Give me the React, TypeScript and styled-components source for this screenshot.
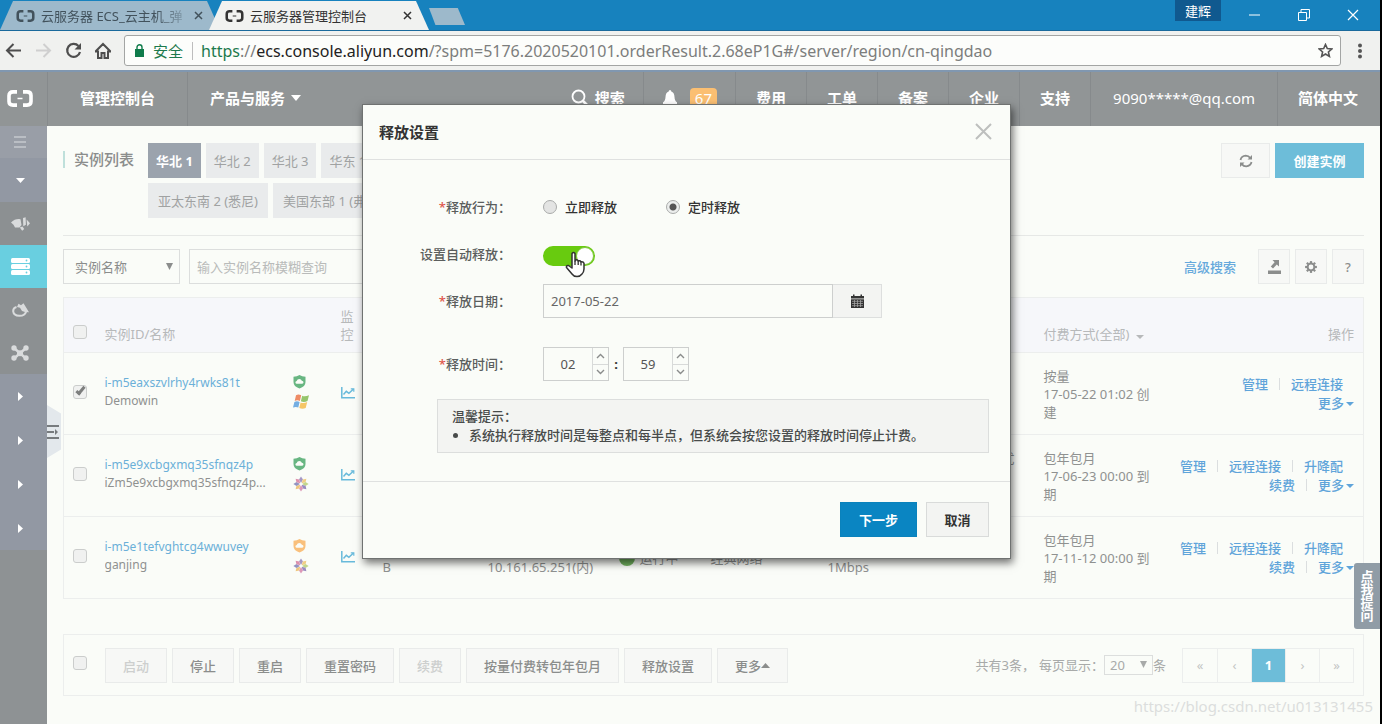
import React from 'react';
import styled, { createGlobalStyle, css } from 'styled-components';

const GlobalStyle = createGlobalStyle`
  *, *::before, *::after { box-sizing: border-box; }
  body {
    margin: 0;
    background: #000;
    font-family: "Noto Sans", "Noto Sans CJK SC", sans-serif;
    font-size: 13px;
    line-height: 18px;
    color: #8b8d8c;
  }
  button, input, select {
    font-family: inherit;
    font-size: inherit;
    color: inherit;
    margin: 0;
  }
  button { cursor: pointer; }
  a { text-decoration: none; color: inherit; }
`;

const Page = styled.div`
  position: relative;
  display: flex;
  flex-direction: column;
  min-height: 100vh;
  margin-right: 2px;
  background: #fafcf8;
  overflow: hidden;
`;

/* ---------- browser window ---------- */

const TabStrip = styled.div`
  display: flex;
  align-items: flex-end;
  height: 31px;
  background: #1782be;
  border-bottom: 1px solid #1a6a9c;
`;

const Tab = styled.div<{ $active?: boolean }>`
  display: flex;
  align-items: center;
  gap: 6px;
  width: 220px;
  height: 29px;
  padding: 0 13px 0 16px;
  color: ${p => (p.$active ? '#333' : '#42525c')};
  background: ${p => (p.$active ? '#f1f2f0' : '#9db9cb')};
  clip-path: polygon(13px 0, calc(100% - 13px) 0, 100% 100%, 0 100%);
  margin-left: ${p => (p.$active ? '-11px' : '0')};
`;

const TabTitle = styled.span<{ $fade?: boolean }>`
  flex: 1;
  overflow: hidden;
  white-space: nowrap;
  ${p => p.$fade && css`mask-image: linear-gradient(90deg, #000 80%, rgba(0, 0, 0, 0.3));`}
`;

const TabClose = styled.button`
  display: flex;
  align-items: center;
  justify-content: center;
  width: 18px;
  height: 18px;
  padding: 0;
  border: 0;
  background: none;
`;

const NewTab = styled.button`
  width: 36px;
  height: 17px;
  margin: 0 0 5px 0;
  padding: 0;
  border: 0;
  background: #9db9cb;
  clip-path: polygon(0 0, 80% 0, 100% 100%, 18% 100%);
`;

const WindowControls = styled.div`
  display: flex;
  align-items: flex-start;
  margin-left: auto;
  align-self: flex-start;
`;

const UserBadge = styled.button`
  width: 46px;
  height: 21px;
  margin-right: 9px;
  padding: 0;
  border: 0;
  background: #10598f;
  color: #fff;
  line-height: 20px;
`;

const WindowButton = styled.button`
  display: flex;
  align-items: center;
  justify-content: center;
  width: 49px;
  height: 29px;
  padding: 0;
  border: 0;
  background: none;
  color: #fff;
  &:last-child { margin-right: 3px; }
`;

const Toolbar = styled.div`
  display: flex;
  align-items: center;
  height: 41px;
  padding: 0 10px 0 4px;
  background: #f0f1ef;
  border-bottom: 2px solid #8097b0;
`;

const ToolButton = styled.button<{ $dim?: boolean }>`
  display: flex;
  align-items: center;
  justify-content: center;
  width: 18px;
  height: 30px;
  margin-right: 12px;
  padding: 0;
  border: 0;
  background: none;
  color: ${p => (p.$dim ? '#cfcfcf' : '#4e4e4e')};
`;

const Address = styled.div`
  display: flex;
  align-items: center;
  flex: 1;
  height: 31px;
  padding: 0 7px 0 10px;
  border: 1px solid #a3a5a4;
  border-radius: 3px;
  background: #fcfdfb;
  font-size: 16px;
  line-height: 22px;
  color: #7c7e7d;
`;

const Secure = styled.span`
  margin-left: 9px;
  padding-right: 9px;
  font-size: 15px;
  line-height: 18px;
  color: #1c7a4d;
  border-right: 1px solid #bdbdbd;
`;

const Url = styled.span`
  flex: 1;
  margin-left: 8px;
  white-space: nowrap;
  overflow: hidden;
  i { font-style: normal; color: #1c7a4d; }
  b { font-weight: 400; color: #222; }
`;

const MenuDots = styled.button`
  display: flex;
  justify-content: center;
  width: 20px;
  margin-left: 9px;
  padding: 0;
  border: 0;
  background: none;
  color: #555;
`;

/* ---------- console header ---------- */

const TopBar = styled.header`
  display: flex;
  height: 54px;
  padding: 0 2px 0 0;
  background: #919596;
  color: #fff;
  font-size: 15px;
  font-weight: 700;
`;

const TopItem = styled.a<{ $pad?: number; $light?: boolean; $plain?: boolean }>`
  display: flex;
  align-items: center;
  gap: 6px;
  padding: 0 ${p => p.$pad ?? 20}px 2px;
  white-space: nowrap;
  font-weight: ${p => (p.$light ? 400 : 700)};
  border-left: 1px solid ${p => (p.$plain ? 'transparent' : '#868a8c')};
`;

const Brand = styled.a`
  display: flex;
  align-items: center;
  width: 47px;
  padding: 0 0 2px 7px;
`;

const Spacer = styled.div`
  flex: 1;
`;

const Count = styled.span`
  margin-left: 6px;
  padding: 0 5px;
  border-radius: 4px;
  background: #fbbf72;
  font-weight: 400;
  line-height: 20px;
`;

/* ---------- layout ---------- */

const Columns = styled.div`
  display: flex;
  flex: 1;
`;

const Sidebar = styled.nav`
  display: flex;
  flex-direction: column;
  flex: none;
  width: 47px;
  background: #8e9294;
`;

const sideTones = {
  top: { height: 32, background: '#999ea7' },
  group: { height: 44, background: '#9298a3' },
  plain: { height: 43, background: '#8c9092' },
  active: { height: 43, background: '#69cfe0' },
};

const SideItem = styled.a<{ $tone: keyof typeof sideTones }>`
  display: flex;
  align-items: center;
  justify-content: center;
  height: ${p => sideTones[p.$tone].height}px;
  padding-right: 7px;
  color: ${p => (p.$tone === 'plain' ? '#d9dbdc' : '#fff')};
  background: ${p => sideTones[p.$tone].background};
`;

const Handle = styled.button`
  position: absolute;
  left: 47px;
  top: 405px;
  display: flex;
  align-items: center;
  width: 14px;
  height: 53px;
  padding: 0;
  border: 0;
  background: #e3e8ec;
  color: #777b7e;
  clip-path: polygon(0 0, 100% 16%, 100% 84%, 0 100%);
`;

const Main = styled.main`
  flex: 1;
  min-width: 0;
  padding: 17px 16px 28px;
`;

const TitleRow = styled.div`
  display: flex;
  align-items: flex-start;
  gap: 5px;
  padding-bottom: 17px;
  border-bottom: 1px solid #e6e8e6;
`;

const Title = styled.h1`
  width: 80px;
  margin: 8px 0 0;
  padding-left: 9px;
  border-left: 2px solid #bfe0db;
  font-size: 15px;
  font-weight: 500;
  line-height: 17px;
  white-space: nowrap;
`;

const Regions = styled.div`
  display: flex;
  flex-direction: column;
  gap: 5px;
  flex: 1;
  min-width: 0;
`;

const RegionLine = styled.div<{ $roomy?: boolean }>`
  display: flex;
  gap: 5px;
  button { padding: 0 ${p => (p.$roomy ? 10 : 8)}px; }
`;

const Region = styled.button<{ $on?: boolean }>`
  height: 35px;
  border: 0;
  white-space: nowrap;
  color: ${p => (p.$on ? '#fff' : '#a0a2a2')};
  font-weight: ${p => (p.$on ? 700 : 400)};
  background: ${p => (p.$on ? '#9ba3ad' : '#e9ebec')};
`;

const PlainButton = styled.button<{ $width?: number; $off?: boolean }>`
  display: flex;
  align-items: center;
  justify-content: center;
  height: 35px;
  padding: 0 17px;
  ${p => p.$width && css`width: ${p.$width}px; padding: 0;`}
  border: 1px solid #e9ebea;
  background: #f7f8f6;
  white-space: nowrap;
  font-weight: 500;
  color: ${p => (p.$off ? '#cdcfce' : '#8b8d8c')};
`;

const CreateButton = styled.button`
  height: 35px;
  width: 89px;
  padding: 0;
  border: 0;
  background: #6dbdd9;
  color: #fff;
  font-weight: 700;
`;

const SearchRow = styled.div`
  display: flex;
  align-items: center;
  gap: 5px;
  padding: 13px 0;
`;

const SelectBox = styled.label<{ $small?: boolean }>`
  position: relative;
  display: inline-flex;
  width: ${p => (p.$small ? 49 : 117)}px;
  height: ${p => (p.$small ? 20 : 35)}px;
  margin-right: ${p => (p.$small ? 0 : 4)}px;
  select {
    appearance: none;
    width: 100%;
    padding: 0 0 0 ${p => (p.$small ? 5 : 11)}px;
    border: 1px solid #dcdedd;
    border-radius: 0;
    background: #fafcf8;
  }
  svg {
    position: absolute;
    right: ${p => (p.$small ? 6 : 7)}px;
    top: calc(50% - 4px);
    pointer-events: none;
  }
`;

const SearchInput = styled.input`
  width: 230px;
  height: 35px;
  padding: 0 7px;
  border: 1px solid #dcdedd;
  background: #fafcf8;
  &::placeholder { color: #b9bbba; opacity: 1; }
`;

const Advanced = styled.a`
  margin: 0 17px 0 auto;
  color: #66a9dc;
  font-weight: 500;
`;

/* ---------- table ---------- */

const Table = styled.table`
  width: 100%;
  table-layout: fixed;
  border-collapse: collapse;
  border: 1px solid #eceeed;
`;

const HeadCell = styled.th<{ $right?: boolean }>`
  height: 55px;
  padding: 0 ${p => (p.$right ? 9 : 0)}px 9px 0;
  vertical-align: bottom;
  text-align: ${p => (p.$right ? 'right' : 'left')};
  font-weight: 400;
  color: #b7b9ba;
  background: #f6f7fa;
`;

const Row = styled.tr`
  border-top: 1px solid #eceeed;
`;

const Cell = styled.td<{ $end?: boolean; $lift?: boolean }>`
  height: 82px;
  padding: 0 ${p => (p.$end ? 9 : 0)}px ${p => (p.$lift ? 3 : 0)}px 0;
  vertical-align: middle;
  color: #8f9190;
`;

const CheckPad = styled.div<{ $head?: boolean }>`
  display: flex;
  padding: 0 0 ${p => (p.$head ? 4 : 0)}px 9px;
`;

const Check = styled.input`
  appearance: none;
  width: 14px;
  height: 14px;
  border: 1px solid #cbcdcc;
  border-radius: 3px;
  background: #f0f1f0;
  &:checked::before {
    content: "";
    display: block;
    width: 5px;
    height: 10px;
    margin: -1px 0 0 4px;
    border: solid #7d7f7e;
    border-width: 0 3px 3px 0;
    transform: rotate(40deg);
  }
`;

const Ident = styled.a`
  display: block;
  font-size: 12px;
  color: #6bb0d8;
`;

const Name = styled.div`
  width: 172px;
  overflow: hidden;
  font-size: 12px;
  text-overflow: ellipsis;
  white-space: nowrap;
`;

const IconStack = styled.div`
  display: flex;
  flex-direction: column;
  gap: 5px;
`;

const Status = styled.div`
  display: flex;
  align-items: center;
  gap: 5px;
`;

const Dot = styled.span`
  width: 16px;
  height: 16px;
  border-radius: 8px;
  background: #72b35f;
`;

const Tail = styled.div`
  width: 187px;
  text-align: right;
  white-space: nowrap;
`;

const PayText = styled.div`
  width: 118px;
`;

const ActionLine = styled.div<{ $more?: boolean }>`
  display: flex;
  align-items: center;
  justify-content: flex-end;
  padding-right: ${p => (p.$more ? 0 : 11)}px;
  height: 19px;
  color: #5fa4da;
  white-space: nowrap;
  a + a::before {
    content: "";
    display: inline-block;
    width: 1px;
    height: 12px;
    margin: 0 11px;
    vertical-align: -1px;
    background: #dbdedf;
  }
  a { font-weight: 500; }
  svg { margin-left: 2px; vertical-align: 2px; }
`;

/* ---------- bottom bar ---------- */

const ActionBar = styled.div`
  display: flex;
  align-items: center;
  gap: 5px;
  height: 62px;
  margin-top: 35px;
  padding: 0 9px 0 0;
  border: 1px solid #eceeed;
`;

const CheckSlot = styled.div`
  display: flex;
  width: 36px;
  padding: 0 0 4px 9px;
`;

const Paging = styled.div`
  display: flex;
  align-items: center;
  margin-left: auto;
  color: #a8aaa9;
`;

const PageCount = styled.span`
  margin-right: 4px;
`;

const Pager = styled.div`
  display: flex;
  margin-left: 16px;
  border: 1px solid #eceeed;
`;

const PageLink = styled.a<{ $on?: boolean }>`
  width: 34px;
  height: 33px;
  line-height: 33px;
  text-align: center;
  color: ${p => (p.$on ? '#fff' : '#c3c5c4')};
  font-weight: ${p => (p.$on ? 700 : 400)};
  background: ${p => (p.$on ? '#6dbdd9' : 'transparent')};
  & + & { border-left: 1px solid #eceeed; }
`;

const AskTab = styled.button`
  position: absolute;
  right: 0;
  top: 563px;
  width: 26px;
  height: 66px;
  padding: 0 6px;
  border: 0;
  border-radius: 3px 0 0 3px;
  background: #909ca6;
  color: #fff;
  font-weight: 700;
  line-height: 13px;
`;

const Watermark = styled.div`
  position: absolute;
  right: 7px;
  bottom: 8px;
  font-size: 15px;
  line-height: 20px;
  color: #dcdedd;
`;

/* ---------- dialog ---------- */

const DialogLayer = styled.div`
  position: absolute;
  inset: 104px 7px auto 0;
  display: flex;
  justify-content: center;
  pointer-events: none;
`;

const Dialog = styled.section`
  width: 649px;
  border: 1px solid #6f7271;
  background: #fafcf8;
  box-shadow: 2px 4px 8px rgba(0, 0, 0, 0.55);
  color: #555857;
  font-weight: 500;
  pointer-events: auto;
`;

const DialogHead = styled.div`
  display: flex;
  align-items: center;
  justify-content: space-between;
  height: 55px;
  padding: 0 18px 0 16px;
  border-bottom: 1px solid #dfe1e0;
`;

const DialogTitle = styled.h2`
  margin: 0;
  font-size: 15px;
  line-height: 20px;
  font-weight: 700;
  color: #333;
`;

const CloseButton = styled.button`
  display: flex;
  padding: 0 0 2px;
  border: 0;
  background: none;
  color: #bdbfbe;
`;

const DialogBody = styled.form`
  padding: 30px 21px 28px 0;
  border-bottom: 1px solid #dfe1e0;
`;

const Field = styled.div<{ $wide?: boolean }>`
  display: flex;
  align-items: center;
  height: 34px;
  margin-bottom: ${p => (p.$wide ? 29 : 13)}px;
`;

const Label = styled.label`
  width: 148px;
  margin-right: 32px;
  text-align: right;
  color: #5b5e5d;
  em { font-style: normal; color: #e0554a; }
`;

const RadioLabel = styled.label`
  display: flex;
  align-items: center;
  gap: 8px;
  margin-right: 49px;
  color: #333;
`;

const Radio = styled.input`
  appearance: none;
  width: 14px;
  height: 14px;
  border: 1px solid #a9abaa;
  border-radius: 7px;
  background: #e3e4e3;
  &:checked { background: radial-gradient(circle, #555 0 3px, #eceeed 4px); }
`;

const Toggle = styled.input`
  appearance: none;
  width: 52px;
  height: 20px;
  margin-top: 4px;
  padding: 1px;
  border-radius: 10px;
  background: #68cb0f;
  &::before {
    content: "";
    display: block;
    width: 18px;
    height: 18px;
    margin-left: 32px;
    border-radius: 9px;
    border: 1px solid #7fc63f;
    background: #fff;
  }
`;

const ToggleWrap = styled.div`
  position: relative;
  display: flex;
`;

const Pointer = styled.svg`
  position: absolute;
  left: 22px;
  top: 9px;
`;

const DateInput = styled.input`
  width: 290px;
  height: 34px;
  padding: 0 7px;
  border: 1px solid #cdcfce;
  background: #fafcf8;
  color: #666;
`;

const DateButton = styled.button`
  display: flex;
  align-items: center;
  justify-content: center;
  width: 49px;
  height: 34px;
  padding: 0;
  border: 1px solid #dddfde;
  border-left: 0;
  background: #f3f4f2;
  color: #333;
`;

const NumberBox = styled.div`
  display: flex;
  width: 66px;
  height: 34px;
  border: 1px solid #cdcfce;
  input {
    width: 48px;
    padding: 0;
    border: 0;
    background: none;
    text-align: center;
    color: #555;
  }
`;

const Steps = styled.div`
  display: flex;
  flex-direction: column;
  flex: 1;
  border-left: 1px solid #d8dad9;
  button {
    display: flex;
    flex: 1;
    align-items: center;
    justify-content: center;
    padding: 0;
    border: 0;
    background: none;
    color: #8a8c8b;
  }
  button + button { border-top: 1px solid #d8dad9; }
`;

const Colon = styled.span`
  width: 14px;
  text-align: center;
  font-weight: 700;
  color: #333;
`;

const Hint = styled.div`
  margin: -11px 0 0 74px;
  padding: 7px 14px;
  border: 1px solid #dcdedd;
  background: #f3f4f2;
  line-height: 19px;
  color: #484b4a;
  p { margin: 0; }
  ul { margin: 0; padding-left: 17px; }
`;

const DialogFoot = styled.div`
  display: flex;
  justify-content: flex-end;
  gap: 9px;
  padding: 20px 21px 21px;
`;

const FootButton = styled.button<{ $primary?: boolean }>`
  width: ${p => (p.$primary ? 77 : 63)}px;
  height: 35px;
  padding: 0;
  font-weight: 700;
  border: 1px solid ${p => (p.$primary ? '#0a82bc' : '#d9dbda')};
  background: ${p => (p.$primary ? '#0a85c2' : '#f3f4f2')};
  color: ${p => (p.$primary ? '#fff' : '#333')};
`;

/* ---------- icons ---------- */

const Logo = ({ w, h }: { w: number; h: number }) => (
  <svg width={w} height={h} viewBox="0 0 26 17" fill="none" stroke="currentColor">
    <path d="M10 1.9H6Q2 1.9 2 5.500v6q0 3.600 4 3.600H10M16 1.900h4Q24 1.900 24 5.500v6q0 3.600-4 3.600H16" strokeWidth="3.600" />
    <path d="M10.500 8.500h5" strokeWidth="1.500" />
  </svg>
);

const Cross = ({ size, weight }: { size: number; weight: number }) => (
  <svg width={size} height={size} viewBox={`0 0 ${size} ${size}`} stroke="currentColor" strokeWidth={weight}>
    <path d={`M1 1L${size - 1} ${size - 1}M${size - 1} 1L1 ${size - 1}`} />
  </svg>
);

const Caret = ({ dir = 'down', w = 8, h = 4 }: { dir?: 'down' | 'up' | 'right'; w?: number; h?: number }) => (
  <svg width={w} height={h} viewBox="0 0 10 10" preserveAspectRatio="none" fill="currentColor">
    <path d={dir === 'down' ? 'M0 0h10L5 10z' : dir === 'up' ? 'M0 10h10L5 0z' : 'M0 0v10l10-5z'} />
  </svg>
);

const Chevron = ({ up }: { up?: boolean }) => (
  <svg width="9" height="6" viewBox="0 0 9 6" fill="none" stroke="currentColor" strokeWidth="1.400">
    <path d={up ? 'M1 5l3.500-3.500L8 5' : 'M1 1l3.500 3.500L8 1'} />
  </svg>
);

const Shield = ({ color }: { color: string }) => (
  <svg width="13" height="14" viewBox="0 0 13 14">
    <path d="M6.500 0Q9 1.800 12.500 1.800V7q0 4.500-6 6.500Q.500 11.500.500 7V1.800Q4 1.800 6.500 0z" fill={color} />
    <path d="M3.600 8.800q-1.300-.2-1.200-1.500.1-1 1.300-1.200Q4.300 4 6.300 4q2 0 2.500 1.800 1.700.1 1.700 1.500 0 1.300-1.300 1.500z" fill="#fafcf8" />
  </svg>
);

const WindowsLogo = () => (
  <svg width="17" height="16" viewBox="0 0 17 16">
    <path d="M3 1.200Q5.500-.3 8.200 1.300L6.900 7Q4.300 5.600 1.700 6.900z" fill="#ee8c66" />
    <path d="M9.200 1.700q2.600 1.300 6.800-.5L14.500 7q-3.500 1.800-6.600.3z" fill="#95c56c" />
    <path d="M1.400 7.900Q4 6.600 6.600 8L5.300 13.500Q2.800 12.300 0 13.600z" fill="#75aee2" />
    <path d="M7.600 8.400q3 1.500 6.600-.4l-1.500 6q-3.300 1.600-6.400 0z" fill="#f5c667" />
  </svg>
);

const Pinwheel = () => (
  <svg width="16" height="16" viewBox="-8 -8 16 16">
    {['#a598c5', '#f0cd85', '#c3d68c', '#9a8cc0', '#dd99b8', '#eec67f', '#9294c2', '#dc90ac'].map((c, i) => (
      <path key={i} d="M0-1L-2-4.500 0-7.600 2-4.500z" fill={c} transform={`rotate(${i * 45})`} />
    ))}
    <circle r="1.300" fill="#fafcf8" />
  </svg>
);

const ChartIcon = () => (
  <svg width="14" height="12" viewBox="0 0 14 12" fill="none" stroke="#68badb" strokeWidth="1.500">
    <path d="M.8 0v10.800H14" />
    <path d="M2.500 7.500l2.800-3.200 2.600 2 4.600-4.300" />
    <path d="M9.800 1.800h3v3" strokeWidth="1.200" />
  </svg>
);

const CalendarIcon = () => (
  <svg width="13" height="14" viewBox="0 0 13 14" fill="currentColor">
    <path d="M0 2h2V0.500h1.500V2h6V0.500H11V2h2v2.500H0z" />
    <path d="M0 5.300h13V14H0z" />
    <path d="M1 7.300h11M1 9.500h11M1 11.700h11M3.500 6v7M6.500 6v7M9.500 6v7" stroke="#aaa" strokeWidth=".7" />
  </svg>
);

const SearchIcon = () => (
  <svg width="18" height="18" viewBox="0 0 18 18" fill="none" stroke="currentColor">
    <circle cx="7.500" cy="7.500" r="6" strokeWidth="1.800" />
    <path d="M12 12l5 5" strokeWidth="2.600" />
  </svg>
);

const BellIcon = () => (
  <svg width="16" height="17" viewBox="0 0 16 17" fill="currentColor">
    <path d="M8 0q1.300 0 1.300 1.600Q12.300 2.600 12.500 7q.1 4 2.500 5.300V14H1v-1.700Q3.400 11 3.500 7q.2-4.400 3.200-5.400Q6.700 0 8 0z" />
    <path d="M6 15h4q-.4 2-2 2t-2-2z" />
  </svg>
);

const RefreshIcon = () => (
  <svg width="14" height="14" viewBox="0 0 14 14" fill="none" stroke="currentColor" strokeWidth="1.800">
    <path d="M1.500 6Q2.300 2 6.800 1.700q2.700 0 4.400 2.200M12.500 8Q11.700 12 7.200 12.300q-2.700 0-4.400-2.200" />
    <path d="M13 1v4.500H8.500zM1 13V8.500h4.500z" fill="currentColor" stroke="none" />
  </svg>
);

const ExportIcon = () => (
  <svg width="13" height="14" viewBox="0 0 13 14" fill="currentColor">
    <path d="M0 10.500h13V14H0z" />
    <path d="M4.500 0H11v6.500L8.800 4.500 5 8.500 2.800 6.600 6.600 2.300z" />
  </svg>
);

const GearIcon = () => (
  <svg width="12" height="12" viewBox="-6 -6 12 12" fill="none" stroke="currentColor">
    <circle r="3.400" strokeWidth="2" />
    {[0, 45, 90, 135, 180, 225, 270, 315].map(a => (
      <path key={a} d="M0-3.800V-5.900" strokeWidth="2.200" transform={`rotate(${a})`} />
    ))}
  </svg>
);

const ServersIcon = () => (
  <svg width="19" height="18" viewBox="0 0 19 18">
    {[0, 6, 12].map(y => (
      <g key={y}>
        <rect y={y} width="19" height="5" rx="1.500" fill="#fff" />
        <circle cx="15.500" cy={y + 2.500} r=".9" fill="#69cfe0" />
      </g>
    ))}
  </svg>
);

const ProductIcon = () => (
  <svg width="19" height="14" viewBox="0 0 19 14" fill="currentColor">
    <path d="M0 5.500Q4 1.500 9.500 2.200L10.500 8 8.500 10.500H4L2.500 7.800z" />
    <path d="M12 1L14.600.2l.3 7.600-2.600 1.500z" />
    <path d="M15.600 2.500L19 6.300l-2.700 3.200z" />
    <path d="M8.800 10.500l2.700-1 1.700 2.500-2 1.800z" />
  </svg>
);

const CloudDbIcon = () => (
  <svg width="17" height="14" viewBox="0 0 17 14" fill="none" stroke="currentColor">
    <path d="M4.500 4Q1 5 1.200 8.300q.5 4.200 6 4.500 5.600.2 7-4.300" strokeWidth="2" />
    <path d="M5 4L6.500.7l2.500 1.500L11.500.3l2 3.200L17 9.300l-4-.3-3-1-2-3.200z" fill="currentColor" stroke="none" />
  </svg>
);

const NetworkIcon = () => (
  <svg width="18" height="16" viewBox="0 0 18 16" fill="currentColor">
    <path d="M3 3l12 10.500M15 3L3 13.500" stroke="currentColor" strokeWidth="2.400" />
    <circle cx="3" cy="3" r="2.700" />
    <circle cx="15" cy="3" r="2.700" />
    <circle cx="3" cy="13" r="2.700" />
    <circle cx="15" cy="13" r="2.700" />
    <circle cx="9" cy="8.200" r="3" />
  </svg>
);

/* ---------- data ---------- */

const regionLines = [
  ['华北 1', '华北 2', '华北 3', '华东 1'],
  ['亚太东南 2 (悉尼)', '美国东部 1 (弗吉尼亚)'],
];

const instances = [
  { id: 'i-m5eaxszvlrhy4rwks81t', name: 'Demowin', windows: true, safe: true, checked: true, ip: '10.31.52.18', pay: '按量', date: '17-05-22 01:02 创建', tail: '' },
  { id: 'i-m5e9xcbgxmq35sfnqz4p', name: 'iZm5e9xcbgxmq35sfnqz4p...', safe: true, ip: '10.31.52.77', pay: '包年包月', date: '17-06-23 00:00 到期', tail: 'I/O优' },
  { id: 'i-m5e1tefvghtcg4wwuvey', name: 'ganjing', ip: '10.161.65.251', pay: '包年包月', date: '17-11-12 00:00 到期', tail: '' },
];

const bulkActions: [string, boolean][] = [
  ['启动', true], ['停止', false], ['重启', false], ['重置密码', false],
  ['续费', true], ['按量付费转包年包月', false], ['释放设置', false],
];

const Stepper = ({ id, value, label }: { id: string; value: string; label: string }) => (
  <NumberBox>
    <input id={id} aria-label={label} defaultValue={value} />
    <Steps>
      <button type="button" aria-label={`${label}增加`}><Chevron up /></button>
      <button type="button" aria-label={`${label}减少`}><Chevron /></button>
    </Steps>
  </NumberBox>
);

const BrowserChrome = () => (
  <>
    <TabStrip>
      <Tab>
        <Logo w={19} h={12} />
        <TabTitle $fade>云服务器 ECS_云主机_弹</TabTitle>
        <TabClose aria-label="关闭标签页"><Cross size={9} weight={1.5} /></TabClose>
      </Tab>
      <Tab $active>
        <Logo w={19} h={12} />
        <TabTitle>云服务器管理控制台</TabTitle>
        <TabClose aria-label="关闭标签页"><Cross size={9} weight={1.5} /></TabClose>
      </Tab>
      <NewTab aria-label="新标签页" />
      <WindowControls>
        <UserBadge>建辉</UserBadge>
        <WindowButton aria-label="最小化">
          <svg width="11" height="2"><path d="M0 1h11" stroke="#fff" /></svg>
        </WindowButton>
        <WindowButton aria-label="还原">
          <svg width="12" height="12" fill="none" stroke="#fff"><path d="M.5 3.500h8v8h-8zM3 3.500v-3h8.500v8.500H8.500" /></svg>
        </WindowButton>
        <WindowButton aria-label="关闭"><Cross size={12} weight={1.2} /></WindowButton>
      </WindowControls>
    </TabStrip>
    <Toolbar>
      <ToolButton aria-label="后退">
        <svg width="17" height="15" viewBox="0 0 17 15" fill="none" stroke="currentColor" strokeWidth="2"><path d="M16 7.500H2M8.500 1L2 7.500 8.500 14" /></svg>
      </ToolButton>
      <ToolButton $dim aria-label="前进">
        <svg width="17" height="15" viewBox="0 0 17 15" fill="none" stroke="currentColor" strokeWidth="2"><path d="M1 7.500h14M8.500 1L15 7.500 8.500 14" /></svg>
      </ToolButton>
      <ToolButton aria-label="刷新">
        <svg width="17" height="17" viewBox="0 0 17 17" fill="none" stroke="currentColor" strokeWidth="2.200"><path d="M13.500 4A6.500 6.500 0 1 0 15 10" /><path d="M16 1v6.500H9.500z" fill="currentColor" stroke="none" /></svg>
      </ToolButton>
      <ToolButton aria-label="主页">
        <svg width="18" height="17" viewBox="0 0 18 17" fill="none" stroke="currentColor" strokeWidth="2"><path d="M1.500 9.500L9 2l7.500 7.500M1 9.500h3V16h3.500v-5h3v5H14V9.500h3" /></svg>
      </ToolButton>
      <Address>
        <svg width="9" height="13" viewBox="0 0 9 13" fill="#0f7b4a"><path d="M0 5h9v8H0z" /><path d="M2 5V3.300a2.500 2.500 0 0 1 5 0V5" fill="none" stroke="#0f7b4a" strokeWidth="1.400" /></svg>
        <Secure>安全</Secure>
        <Url><i>https</i>://<b>ecs.console.aliyun.com</b>/?spm=5176.2020520101.orderResult.2.68eP1G#/server/region/cn-qingdao</Url>
        <svg width="15" height="15" viewBox="0 0 15 15" fill="none" stroke="#555" strokeWidth="1.600"><path d="M7.500 1.500l1.800 4.100 4.400.4-3.300 3 1 4.400-3.900-2.400-3.900 2.400 1-4.400-3.300-3 4.400-.4z" /></svg>
      </Address>
      <MenuDots aria-label="菜单">
        <svg width="4" height="16" fill="currentColor"><circle cx="2" cy="2.500" r="2" /><circle cx="2" cy="8" r="2" /><circle cx="2" cy="13.500" r="2" /></svg>
      </MenuDots>
    </Toolbar>
  </>
);

const ReleaseDialog = () => (
  <DialogLayer>
    <Dialog role="dialog" aria-labelledby="dialog-title">
      <DialogHead>
        <DialogTitle id="dialog-title">释放设置</DialogTitle>
        <CloseButton aria-label="关闭"><Cross size={17} weight={2} /></CloseButton>
      </DialogHead>
      <DialogBody>
        <Field>
          <Label as="span"><em>*</em>释放行为：</Label>
          <RadioLabel><Radio type="radio" name="mode" />立即释放</RadioLabel>
          <RadioLabel><Radio type="radio" name="mode" defaultChecked />定时释放</RadioLabel>
        </Field>
        <Field>
          <Label htmlFor="auto">设置自动释放：</Label>
          <ToggleWrap>
            <Toggle id="auto" type="checkbox" role="switch" defaultChecked />
            <Pointer width="22" height="27" viewBox="0 0 22 27">
              <path d="M7 2.500Q8.500.5 10 2.500v7.500l1.200-1.200q1.500-.3 2 1.200 2-.9 2.600.8 2.500-.6 3.200 1.500v5.700q-.2 3.500-2 5-2 2.600-5 2.600-3.300-.1-5-2.600L1.500 16.500q-.5-2.300 2-2L7 17z" fill="#fff" stroke="#333" strokeWidth="1.500" strokeLinejoin="round" />
              <path d="M10 10v4M13.200 10v4M16 11v3.500" stroke="#333" strokeWidth="1.300" />
            </Pointer>
          </ToggleWrap>
        </Field>
        <Field $wide>
          <Label htmlFor="date"><em>*</em>释放日期：</Label>
          <DateInput id="date" defaultValue="2017-05-22" />
          <DateButton type="button" aria-label="选择日期"><CalendarIcon /></DateButton>
        </Field>
        <Field $wide>
          <Label htmlFor="hour"><em>*</em>释放时间：</Label>
          <Stepper id="hour" value="02" label="小时" />
          <Colon>:</Colon>
          <Stepper id="minute" value="59" label="分钟" />
        </Field>
        <Hint>
          <p>温馨提示：</p>
          <ul><li>系统执行释放时间是每整点和每半点，但系统会按您设置的释放时间停止计费。</li></ul>
        </Hint>
      </DialogBody>
      <DialogFoot>
        <FootButton type="button" $primary>下一步</FootButton>
        <FootButton type="button">取消</FootButton>
      </DialogFoot>
    </Dialog>
  </DialogLayer>
);

export default function App() {
  return (
    <Page>
      <GlobalStyle />
      <BrowserChrome />
      <TopBar>
        <Brand href="#home" aria-label="首页"><Logo w={26} h={17} /></Brand>
        <TopItem href="#console" $pad={32}>管理控制台</TopItem>
        <TopItem href="#products" $pad={22}>产品与服务 <Caret w={10} h={6} /></TopItem>
        <Spacer />
        <TopItem href="#search" $plain $pad={18}><SearchIcon />搜索</TopItem>
        <TopItem href="#messages" $pad={18}><BellIcon /><Count>67</Count></TopItem>
        <TopItem href="#fee">费用</TopItem>
        <TopItem href="#ticket">工单</TopItem>
        <TopItem href="#record">备案</TopItem>
        <TopItem href="#corp">企业</TopItem>
        <TopItem href="#support">支持</TopItem>
        <TopItem href="#account" $light $pad={22}>9090*****@qq.com</TopItem>
        <TopItem href="#lang">简体中文</TopItem>
      </TopBar>
      <Columns>
        <Sidebar>
          <SideItem href="#menu" $tone="top" aria-label="菜单">
            <svg width="12" height="12" stroke="#dcdee1" strokeWidth="1.200"><path d="M0 1h12M0 6h12M0 11h12" /></svg>
          </SideItem>
          <SideItem href="#g0" $tone="group" aria-label="展开"><Caret w={9} h={5} /></SideItem>
          <SideItem href="#s1" $tone="plain" aria-label="产品"><ProductIcon /></SideItem>
          <SideItem href="#s2" $tone="active" aria-label="云服务器"><ServersIcon /></SideItem>
          <SideItem href="#s3" $tone="plain" aria-label="数据库"><CloudDbIcon /></SideItem>
          <SideItem href="#s4" $tone="plain" aria-label="网络"><NetworkIcon /></SideItem>
          {[1, 2, 3, 4].map(n => (
            <SideItem key={n} href={`#g${n}`} $tone="group" aria-label="展开"><Caret dir="right" w={5} h={9} /></SideItem>
          ))}
        </Sidebar>
        <Main>
          <TitleRow>
            <Title>实例列表</Title>
            <Regions>
              {regionLines.map((line, i) => (
                <RegionLine key={i} $roomy={i === 1}>
                  {line.map(r => <Region key={r} $on={r === '华北 1'}>{r}</Region>)}
                </RegionLine>
              ))}
            </Regions>
            <PlainButton $width={49} aria-label="刷新"><RefreshIcon /></PlainButton>
            <CreateButton>创建实例</CreateButton>
          </TitleRow>
          <SearchRow>
            <SelectBox>
              <select aria-label="搜索字段"><option>实例名称</option></select>
              <Caret w={7} h={7} />
            </SelectBox>
            <SearchInput aria-label="搜索" placeholder="输入实例名称模糊查询" />
            <Advanced href="#advanced">高级搜索</Advanced>
            <PlainButton $width={32} aria-label="导出"><ExportIcon /></PlainButton>
            <PlainButton $width={32} aria-label="设置"><GearIcon /></PlainButton>
            <PlainButton $width={32}>?</PlainButton>
          </SearchRow>
          <Table>
            <colgroup>
              {[41, 188, 48, 42, 105, 131, 92, 117].map((w, i) => <col key={i} width={w} />)}
              <col />
              <col width="130" />
              <col width="190" />
            </colgroup>
            <thead>
              <tr>
                <HeadCell><CheckPad $head><Check type="checkbox" aria-label="全选" /></CheckPad></HeadCell>
                <HeadCell>实例ID/名称</HeadCell>
                <HeadCell />
                <HeadCell>监<br />控</HeadCell>
                <HeadCell>所在可用区</HeadCell>
                <HeadCell>IP地址</HeadCell>
                <HeadCell>状态</HeadCell>
                <HeadCell>网络类型</HeadCell>
                <HeadCell>配置</HeadCell>
                <HeadCell>付费方式(全部)&nbsp; <Caret w={8} h={4} /></HeadCell>
                <HeadCell $right>操作</HeadCell>
              </tr>
            </thead>
            <tbody>
              {instances.map(it => (
                <Row key={it.id}>
                  <Cell $lift><CheckPad><Check type="checkbox" aria-label={it.name} defaultChecked={it.checked} /></CheckPad></Cell>
                  <Cell $lift>
                    <Ident href={`#${it.id}`}>{it.id}</Ident>
                    <Name>{it.name}</Name>
                  </Cell>
                  <Cell $lift>
                    <IconStack>
                      <Shield color={it.safe ? '#68b682' : '#f9c07c'} />
                      {it.windows ? <WindowsLogo /> : <Pinwheel />}
                    </IconStack>
                  </Cell>
                  <Cell><ChartIcon /></Cell>
                  <Cell>青岛可用区<br />B</Cell>
                  <Cell>{it.ip}(公)<br />{it.ip}(内)</Cell>
                  <Cell><Status><Dot />运行中</Status></Cell>
                  <Cell>经典网络</Cell>
                  <Cell>{it.tail ? <><Tail>{it.tail}</Tail>化<br /></> : <>CPU：1核<br /></>}1Mbps</Cell>
                  <Cell><PayText>{it.pay}<br />{it.date}</PayText></Cell>
                  <Cell $end>
                    <ActionLine>
                      <a href="#manage">管理</a>
                      <a href="#remote">远程连接</a>
                      {!it.windows && <a href="#resize">升降配</a>}
                    </ActionLine>
                    <ActionLine $more>
                      {!it.windows && <a href="#renew">续费</a>}
                      <a href="#more">更多<Caret w={8} h={4} /></a>
                    </ActionLine>
                  </Cell>
                </Row>
              ))}
            </tbody>
          </Table>
          <ActionBar>
            <CheckSlot><Check type="checkbox" aria-label="全选" /></CheckSlot>
            {bulkActions.map(([label, off]) => <PlainButton key={label} $off={off} disabled={off}>{label}</PlainButton>)}
            <PlainButton>更多<Caret dir="up" w={9} h={5} /></PlainButton>
            <Paging>
              <PageCount>共有3条，</PageCount>
              <span>每页显示：</span>
              <SelectBox $small>
                <select aria-label="每页条数"><option>20</option></select>
                <Caret w={7} h={7} />
              </SelectBox>
              条
              <Pager>
                <PageLink href="#first">«</PageLink>
                <PageLink href="#prev">‹</PageLink>
                <PageLink href="#1" $on>1</PageLink>
                <PageLink href="#next">›</PageLink>
                <PageLink href="#last">»</PageLink>
              </Pager>
            </Paging>
          </ActionBar>
        </Main>
      </Columns>
      <Handle aria-label="收起侧栏">
        <svg width="12" height="16" viewBox="0 0 12 16" fill="currentColor">
          <path d="M0 1h12v2H0zM0 7h7v2H0zM8 5l3 3-3 3zM0 13h12v2H0z" />
        </svg>
      </Handle>
      <AskTab>点我提问</AskTab>
      <Watermark>https://blog.csdn.net/u013131455</Watermark>
      <ReleaseDialog />
    </Page>
  );
}
